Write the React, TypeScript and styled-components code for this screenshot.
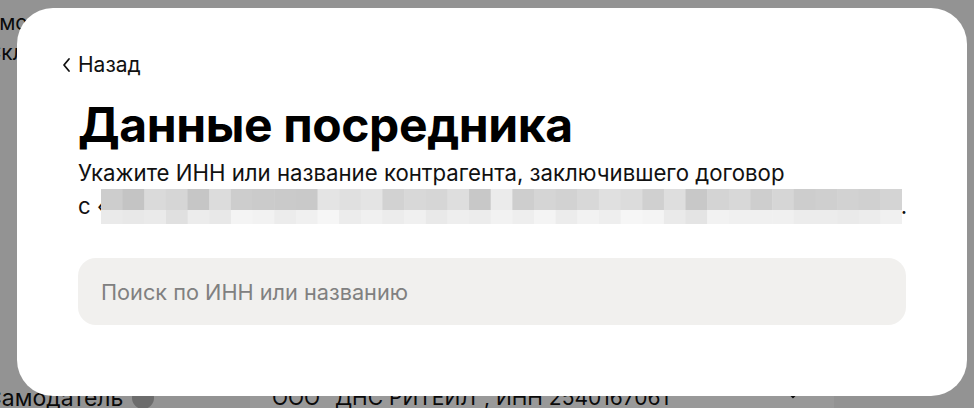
import React from "react";
import styled, { createGlobalStyle } from "styled-components";

const GlobalStyle = createGlobalStyle`
  html, body {
    margin: 0;
    padding: 0;
    width: 974px;
    height: 408px;
    overflow: hidden;
    background: #f6f6f6;
    font-family: Inter, "Noto Sans", "Liberation Sans", sans-serif;
    color: #000;
  }
  * { box-sizing: border-box; }
`;

/* ---------- page underneath the dialog ---------- */

const Page = styled.div`
  position: relative;
  width: 974px;
  height: 408px;
  overflow: hidden;
`;

const Form = styled.div`
  display: flex;
  flex-direction: column;
  height: 100%;
  padding: 8px 0 0 0;
`;

const TopLabel = styled.div<{ $shift: number }>`
  margin-left: ${(p) => -p.$shift}px;
  font-size: 21px;
  line-height: 30px;
  color: #111;
  white-space: nowrap;
`;

const BottomRow = styled.div`
  margin-top: auto;
  display: flex;
  align-items: flex-start;
  height: 24px;
  margin-bottom: -2px;
`;

const RowLabel = styled.div`
  width: 250px;
  margin-left: -15px;
  display: flex;
  align-items: center;
  gap: 9px;
  font-size: 23px;
  line-height: 24px;
  color: #111;
  white-space: nowrap;
`;

const InfoDot = styled.span`
  width: 22px;
  height: 22px;
  border-radius: 50%;
  background: #b4b4b4;
`;

const SelectBox = styled.div`
  margin-left: 15px;
  width: 584px;
  height: 48px;
  margin-top: -10px;
  padding: 10px 30px 0 22px;
  background: #fff;
  display: flex;
  align-items: flex-start;
  justify-content: space-between;
  font-size: 21px;
  line-height: 24px;
  color: #111;
  white-space: nowrap;
`;

const Overlay = styled.div`
  position: absolute;
  inset: 0;
  background: rgba(0, 0, 0, 0.4);
`;

/* ---------- dialog ---------- */

const Dialog = styled.div`
  position: absolute;
  left: 17px;
  top: 8px;
  width: 950px;
  height: 388px;
  background: #fff;
  border-radius: 36px;
  padding: 44px 61px 0 61px;
  display: flex;
  flex-direction: column;
`;

const BackLink = styled.button`
  align-self: flex-start;
  margin-left: -16px;
  padding: 0;
  border: 0;
  background: none;
  display: flex;
  align-items: center;
  gap: 7px;
  font-family: inherit;
  font-size: 21px;
  line-height: 26px;
  color: #111;
  cursor: pointer;
`;

const Title = styled.h1`
  margin: 20px 0 0 0;
  font-size: 48px;
  line-height: 54px;
  font-weight: 700;
  letter-spacing: -0.4px;
  color: #000;
`;

const Lead = styled.p`
  margin: 4px 0 0 0;
  font-size: 22.2px;
  line-height: 33px;
  color: #111;
`;

const LeadLine = styled.span`
  display: block;
  white-space: nowrap;
`;

const Hidden = styled.svg`
  display: inline-block;
  vertical-align: -10px;
  margin: 0 -1px 0 -9px;
`;

const SearchField = styled.input`
  margin-top: 34px;
  width: 100%;
  height: 67px;
  flex-shrink: 0;
  border: 0;
  outline: none;
  border-radius: 18px;
  background: #f1f0ee;
  padding: 0 23px;
  font-family: inherit;
  font-size: 21.7px;
  color: #111;
  &::placeholder {
    color: #808080;
  }
`;

/* redacted company name, drawn as a coarse mosaic */
const TOP = [
  205, 196, 218, 214, 198, 220, 205, 203, 202, 201, 228, 224, 228, 210, 216,
  214, 222, 200, 235, 206, 213, 210, 216, 224, 220, 208, 222, 200, 212, 216,
  206, 214, 205, 207, 210, 208, 212,
];
const BOTTOM = [
  234, 232, 234, 224, 236, 232, 244, 242, 236, 240, 246, 236, 240, 236, 240,
  233, 238, 236, 242, 238, 244, 236, 242, 238, 246, 244, 234, 228, 242, 240,
  240, 240, 236, 236, 234, 236, 240,
];

function Mosaic() {
  const cell = 21.65;
  const w = Math.round(cell * TOP.length);
  return (
    <Hidden width={w} height={35} viewBox={`0 0 ${w} 35`}>
      {TOP.map((v, i) => (
        <rect
          key={`t${i}`}
          x={i * cell}
          y={0}
          width={cell + 0.5}
          height={21}
          fill={`rgb(${v},${v},${v})`}
        />
      ))}
      {BOTTOM.map((v, i) => (
        <rect
          key={`b${i}`}
          x={i * cell}
          y={21}
          width={cell + 0.5}
          height={14}
          fill={`rgb(${v},${v},${v})`}
        />
      ))}
    </Hidden>
  );
}

function ChevronLeft() {
  return (
    <svg width="9" height="16" viewBox="0 0 9 16" fill="none">
      <path
        d="M7 2L2 8l5 6"
        stroke="#111"
        strokeWidth="1.8"
        strokeLinecap="round"
        strokeLinejoin="round"
      />
    </svg>
  );
}

function ChevronDown() {
  return (
    <svg width="22" height="14" viewBox="0 0 22 14" fill="none">
      <path d="M3 3l8 8 8-8" stroke="#111" strokeWidth="2.2" />
    </svg>
  );
}

export default function App() {
  return (
    <Page>
      <GlobalStyle />
      <Form>
        <TopLabel $shift={28}>Самозанятость</TopLabel>
        <TopLabel $shift={14}>Склад</TopLabel>
        <BottomRow>
          <RowLabel>
            Самодатель <InfoDot />
          </RowLabel>
          <SelectBox>
            <span>ООО "ДНС РИТЕЙЛ", ИНН 2540167061</span>
            <ChevronDown />
          </SelectBox>
        </BottomRow>
      </Form>
      <Overlay />
      <Dialog role="dialog">
        <BackLink>
          <ChevronLeft />
          Назад
        </BackLink>
        <Title>Данные посредника</Title>
        <Lead>
          <LeadLine>
            Укажите ИНН или название контрагента, заключившего договор
          </LeadLine>
          <LeadLine>
            с «<Mosaic />.
          </LeadLine>
        </Lead>
        <SearchField placeholder="Поиск по ИНН или названию" />
      </Dialog>
    </Page>
  );
}
